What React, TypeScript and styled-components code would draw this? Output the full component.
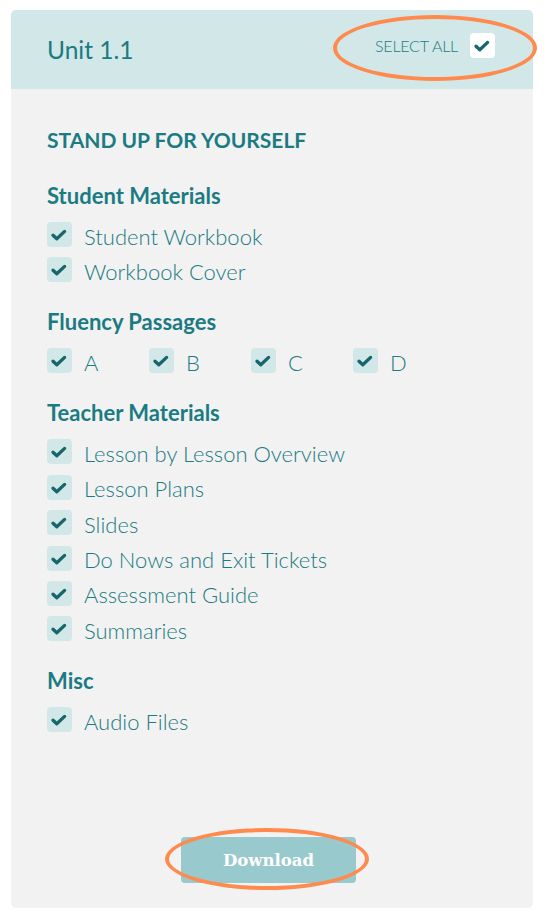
import React from 'react';
import styled, { createGlobalStyle } from 'styled-components';

const GlobalStyle = createGlobalStyle`
  html, body {
    margin: 0;
    padding: 0;
    background: #ffffff;
  }
  body {
    font-family: Lato, 'Open Sans', sans-serif;
  }
`;

const TEAL = '#1b7b82';
const CHECK = '#16666c';

const Page = styled.div`
  padding: 10px 16px 13px 11px;
`;

const Card = styled.div`
  position: relative;
  width: 522px;
  height: 898px;
  border-radius: 5px;
  background: #f2f2f2;
  display: flex;
  flex-direction: column;
`;

const Header = styled.div`
  height: 79px;
  flex-shrink: 0;
  background: #d2e7e7;
  border-radius: 5px 5px 0 0;
  display: flex;
  align-items: center;
  justify-content: space-between;
  padding: 0 38px 0 36px;
`;

const Title = styled.h1`
  margin: 0;
  font-size: 24.5px;
  font-weight: 400;
  color: ${TEAL};
`;

const SelectAll = styled.label`
  display: flex;
  align-items: center;
  gap: 12px;
  margin-bottom: 8px;
  font-size: 16px;
  font-weight: 300;
  color: ${TEAL};
  text-transform: uppercase;
  letter-spacing: -0.2px;
`;

const Box = styled.span<{ $white?: boolean }>`
  position: relative;
  width: 25px;
  height: 25px;
  border-radius: 4px;
  flex-shrink: 0;
  background: ${({ $white }) => {
    return $white ? '#ffffff' : '#d2e7e7';
  }};
`;

const Body = styled.div`
  flex: 1;
  display: flex;
  flex-direction: column;
  padding: 39px 36px 25px;
`;

const UnitName = styled.h2`
  margin: 0 0 31px;
  font-size: 21px;
  font-weight: 700;
  color: ${TEAL};
  line-height: 24px;
`;

const Section = styled.div`
  margin-bottom: 27px;
`;

const SectionTitle = styled.h3`
  margin: 0 0 13px;
  font-size: 22px;
  font-weight: 700;
  color: ${TEAL};
  line-height: 26px;
`;

const List = styled.div<{ $row?: boolean }>`
  display: flex;
  flex-direction: ${({ $row }) => {
    return $row ? 'row' : 'column';
  }};
  gap: ${({ $row }) => {
    return $row ? '0' : '10.4px';
  }};
`;

const Item = styled.label<{ $width?: number }>`
  display: flex;
  align-items: center;
  gap: 12px;
  height: 25px;
  width: ${({ $width }) => {
    return $width ? `${$width}px` : 'auto';
  }};
  font-size: 22px;
  font-weight: 300;
  color: ${TEAL};
`;

const ItemText = styled.span`
  padding-top: 3px;
`;

const Footer = styled.div`
  margin-top: auto;
  display: flex;
  justify-content: center;
  padding-right: 7px;
`;

const DownloadBtn = styled.button`
  width: 175px;
  height: 46px;
  border: none;
  border-radius: 4px;
  background: #98c9cc;
  color: #ffffff;
  font-family: 'DejaVu Serif', serif;
  font-weight: 700;
  font-size: 16.5px;
  cursor: pointer;
`;

const Ring = styled.span<{ $l: number; $t: number; $w: number; $h: number }>`
  position: absolute;
  left: ${({ $l }) => {
    return $l;
  }}px;
  top: ${({ $t }) => {
    return $t;
  }}px;
  width: ${({ $w }) => {
    return $w;
  }}px;
  height: ${({ $h }) => {
    return $h;
  }}px;
  border: 4px solid #ff8a4e;
  border-radius: 50%;
  box-sizing: border-box;
  pointer-events: none;
`;

const CheckMark = styled.svg`
  position: absolute;
  inset: 0;
`;

const Check = (): React.ReactElement => {
  return (
    <CheckMark width="25" height="25" viewBox="0 0 25 25">
      <path
        d="M6 13.2 L9.8 16.8 L17.6 9.4"
        fill="none"
        stroke={CHECK}
        strokeWidth="3.3"
        strokeLinecap="round"
        strokeLinejoin="round"
      />
    </CheckMark>
  );
};

const SECTIONS = [
  { title: 'Student Materials', items: ['Student Workbook', 'Workbook Cover'] },
  { title: 'Fluency Passages', items: ['A', 'B', 'C', 'D'], row: true },
  {
    title: 'Teacher Materials',
    items: [
      'Lesson by Lesson Overview',
      'Lesson Plans',
      'Slides',
      'Do Nows and Exit Tickets',
      'Assessment Guide',
      'Summaries',
    ],
  },
  { title: 'Misc', items: ['Audio Files'] },
];

const App = (): React.ReactElement => {
  return (
    <Page>
      <GlobalStyle />
      <Card>
        <Header>
          <Title>Unit 1.1</Title>
          <SelectAll>
            Select All
            <Box $white>
              <Check />
            </Box>
          </SelectAll>
        </Header>
        <Body>
          <UnitName>STAND UP FOR YOURSELF</UnitName>
          {SECTIONS.map((s) => {
            return (
              <Section key={s.title}>
                <SectionTitle>{s.title}</SectionTitle>
                <List $row={s.row}>
                  {s.items.map((it) => {
                    return (
                      <Item key={it} $width={s.row ? 102 : undefined}>
                        <Box>
                          <Check />
                        </Box>
                        <ItemText>{it}</ItemText>
                      </Item>
                    );
                  })}
                </List>
              </Section>
            );
          })}
          <Footer>
            <DownloadBtn>Download</DownloadBtn>
          </Footer>
        </Body>
        <Ring $l={322} $t={5} $w={204} $h={66} />
        <Ring $l={154} $t={818} $w={204} $h={62} />
      </Card>
    </Page>
  );
};

export default App;
